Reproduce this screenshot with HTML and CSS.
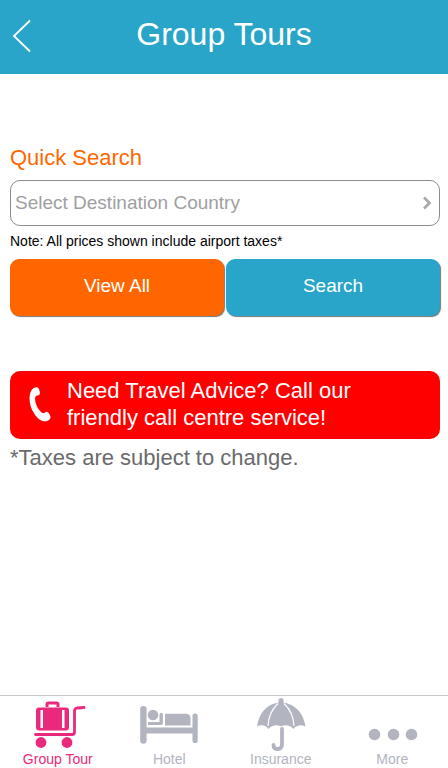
FILE: index.html
```html
<!DOCTYPE html>
<html lang="en">
<head>
<meta charset="utf-8">
<meta name="viewport" content="width=device-width, initial-scale=1">
<title>Group Tours</title>
<link rel="stylesheet" href="styles.css">
</head>
<body>
<header class="topbar">
  <button class="back" type="button" aria-label="Back">
    <svg width="20" height="34" viewBox="0 0 20 34" aria-hidden="true"><path d="M18 1.500 2 17l16 15.500" fill="none" stroke="#fff" stroke-width="1.800"/></svg>
  </button>
  <h1 class="title">Group Tours</h1>
</header>

<main class="content">
  <form class="search">
    <label class="heading" for="country">Quick Search</label>
    <div class="field">
      <select class="select" id="country">
        <option>Select Destination Country</option>
      </select>
      <svg class="chevron" width="10" height="14" viewBox="0 0 10 14" aria-hidden="true"><path d="M2 1.500 7.500 7 2 12.500" fill="none" stroke="#aaa" stroke-width="2.800"/></svg>
    </div>
    <p class="note">Note: All prices shown include airport taxes*</p>
    <div class="actions">
      <button class="btn btn-all" type="button">View All</button>
      <button class="btn btn-search" type="button">Search</button>
    </div>
  </form>

  <button class="call" type="button">
    <svg class="phone" width="22" height="38" viewBox="0 0 22 38" aria-hidden="true"><path d="M3 4.500C4.500 2.800 7 2 8.300 2.300c1.500.5 2.500 3.500 2.700 5.700.1 1.500-.9 2.300-2.700 2.500-1.300.2-2.100.7-2.200 2.500-.2 5 2.500 11 6.500 14.500 1.200 1 2.200.9 3.300 0 1.200-1 2.200-1.200 3.100-.2 1.300 1.500 2.400 3.500 2.500 5 0 2-2.500 4-5.500 4-4.500 0-8-3.300-10.800-7.800C2 24 .500 18.500.500 13.500c0-3.500.8-7 2.500-9z" fill="#fff"/></svg>
    <span>Need Travel Advice? Call our friendly call centre service!</span>
  </button>
  <p class="taxes">*Taxes are subject to change.</p>
</main>

<nav class="tabs" aria-label="Main">
  <a class="tab tab-active" href="#tour" aria-current="page">
    <svg class="icon" width="60" height="55" viewBox="0 0 60 55" aria-hidden="true">
      <g fill="currentColor">
        <path d="M17.500 11V8.500a3 3 0 0 1 3-3h8a3 3 0 0 1 3 3V11h-3V8.500h-8V11z"/>
        <path fill-rule="evenodd" d="M11 11.500h27a3 3 0 0 1 3 3v17a3 3 0 0 1-3 3H11a3 3 0 0 1-3-3V14.500a3 3 0 0 1 3-3zM12.500 14v18h2.500V14zm21.500 0v18h2.500V14z"/>
        <circle cx="13" cy="46.500" r="5.400"/><circle cx="39" cy="46.500" r="5.400"/>
      </g>
      <path d="M7.500 38.500H44q2.500 0 2.500-2.500V15q0-2.500 2.500-3L56 11.500" fill="none" stroke="currentColor" stroke-width="2.800" stroke-linecap="round"/>
    </svg>
    <span>Group Tour</span>
  </a>
  <a class="tab" href="#hotel">
    <svg class="icon" width="60" height="55" viewBox="0 0 60 55" aria-hidden="true">
      <g fill="currentColor">
        <path d="M1.200 13.200a3.200 3.200 0 0 1 6.400 0V31.500H53.500V20a2.600 2.600 0 0 1 5.200 0V44.500a2.600 2.600 0 0 1-5.200 0V37.500H7.600V44.500a3.200 3.200 0 0 1-6.400 0z"/>
        <circle cx="14" cy="19" r="5.300"/>
        <path d="M9 26h11.500V18.500a1.700 1.700 0 0 1 3.400 0v8.500q0 2-2 2H9zM26 17.800h21q4 0 4.500 4v7.700H26z"/>
      </g>
    </svg>
    <span>Hotel</span>
  </a>
  <a class="tab" href="#insurance">
    <svg class="icon" width="60" height="55" viewBox="0 0 60 55" aria-hidden="true">
      <path d="M30 2a2.500 2.500 0 0 1 2.500 2.500v2C44 8 52.500 17 54.500 30.500c-4-2-9-1.500-12 2.500-3.500-4-8.500-4.500-12.500-2.500-4-2-9-1.500-12.500 2.500-3-4-7.500-4.500-11.500-2.500C8 17 16 8 27.500 6.500v-2A2.500 2.500 0 0 1 30 2z" fill="currentColor"/>
      <path d="M27 7.500C21 13 17.500 21 17 30M33 7.500C39 13 42.500 21 43 30" fill="none" stroke="#fff" stroke-width="1.200"/>
      <path d="M31 33v15q0 5-4.300 5t-4.200-4" fill="none" stroke="currentColor" stroke-width="3.800" stroke-linecap="round"/>
    </svg>
    <span>Insurance</span>
  </a>
  <a class="tab" href="#more">
    <svg class="icon" width="60" height="55" viewBox="0 0 60 55" aria-hidden="true">
      <g fill="currentColor"><circle cx="12.500" cy="38.500" r="5.800"/><circle cx="31.500" cy="38.500" r="5.800"/><circle cx="49.500" cy="38.500" r="5.800"/></g>
    </svg>
    <span>More</span>
  </a>
</nav>
</body>
</html>
```
FILE: styles.css
```css
* {
  box-sizing: border-box;
}

body {
  margin: 0;
  min-height: 100vh;
  display: flex;
  flex-direction: column;
  background: #fff;
  color: #000;
  font-family: "Liberation Sans", Arial, sans-serif;
}

h1,
p {
  margin: 0;
  font-weight: 400;
}

button,
select {
  font: inherit;
  border: 0;
  cursor: pointer;
}

/* Header */
.topbar {
  display: grid;
  grid-template-columns: 48px 1fr 48px;
  align-items: center;
  height: 74px;
  padding-bottom: 6px;
  background: #28a5c8;
  color: #fff;
}

.back {
  display: flex;
  padding: 4px 12px 0;
  background: none;
}

.title {
  font-size: 32px;
  line-height: 36px;
  text-align: center;
}

/* Search form */
.content {
  flex: 1;
  padding: 71px 8px 24px 10px;
}

.heading {
  display: block;
  margin-bottom: 9px;
  color: #ff6600;
  font-size: 22px;
  line-height: 26px;
}

.field {
  position: relative;
}

.select {
  display: block;
  width: 100%;
  height: 46px;
  padding: 0 32px 2px 4px;
  appearance: none;
  border: 1px solid #8c8c8c;
  border-radius: 10px;
  background: #fff;
  color: #a0a0a0;
  font-size: 19px;
}

.chevron {
  position: absolute;
  top: 16px;
  right: 8px;
  pointer-events: none;
}

.note {
  margin: 7px 0 10px;
  font-size: 14px;
  line-height: 16px;
}

.actions {
  display: grid;
  grid-template-columns: 1fr 1fr;
  gap: 2px;
}

.btn {
  height: 57px;
  padding: 0 0 4px;
  border-radius: 9px;
  box-shadow: 1px 1px 1px #777;
  color: #fff;
  font-size: 19px;
}

.btn-all {
  background: #ff6600;
}

.btn-search {
  background: #28a5c8;
}

/* Call centre banner */
.call {
  display: flex;
  gap: 16px;
  width: 100%;
  margin-top: 55px;
  padding: 6px 72px 8px 19px;
  border-radius: 10px;
  background: #ff0000;
  color: #fff;
  font-size: 22px;
  line-height: 27px;
  text-align: left;
}

.phone {
  flex: none;
  align-self: center;
}

.taxes {
  margin-top: 5px;
  color: #6a6a6a;
  font-size: 22px;
  line-height: 28px;
}

/* Tab bar */
.tabs {
  display: grid;
  grid-template-columns: repeat(4, 1fr);
  padding: 0 0 1px 2px;
  border-top: 1px solid #c8c8c8;
}

.tab {
  display: flex;
  flex-direction: column;
  align-items: center;
  color: #b2b4c0;
  font-size: 14px;
  line-height: 16px;
  text-decoration: none;
}

.tab-active {
  color: #e9297b;
}
```
